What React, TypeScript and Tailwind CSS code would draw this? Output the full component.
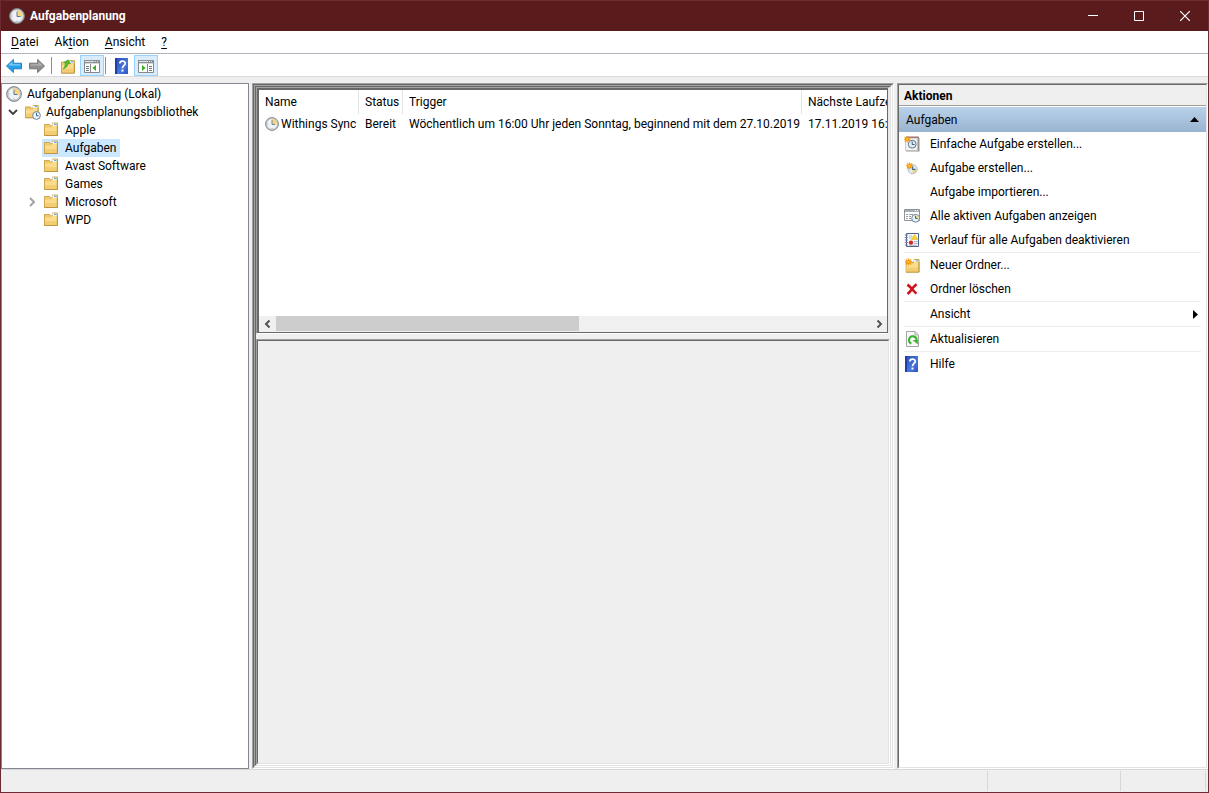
import React from 'react';

type IconProps = { className?: string };

function ClockFace({ className = 'size-4' }: IconProps) {
  return (
    <svg viewBox="0 0 16 16" className={`shrink-0 ${className}`} aria-hidden="true">
      <circle cx="8" cy="8" r="7.4" fill="#c3c6ca" stroke="#808388" strokeWidth="1" />
      <circle cx="8" cy="8" r="6" fill="#eff3f8" stroke="#b9bdc3" strokeWidth="0.6" />
      <path d="M8 8.4V2.2A5.8 5.8 0 0 1 13.8 8.4Z" fill="#f5d77e" />
      <path d="M8 3.6V8.5H11.6" fill="none" stroke="#5c7698" strokeWidth="1" />
      <path d="M8 12.6v1M2.6 8h1" stroke="#8b9097" strokeWidth="0.8" />
    </svg>
  );
}

function FolderShape() {
  return (
    <>
      <path d="M1.5 2.5h5l1 1.2h2V1h5V13.5H1.5Z" fill="#f0cb6c" stroke="#cb9f45" strokeWidth="0.9" />
      <path d="M9.4 1.5h4.4v2.2H9.4Z" fill="#fff" />
      <path d="M11 1.8h2.6v1h-2.6Z" fill="#3f97de" />
      <path d="M2 5.4h6l1.4-1.3H14v9H2Z" fill="#fadc8c" />
      <path d="M2 9.2h12v3.9H2Z" fill="#f2cd71" />
      <path d="M14.3 3.5v10H1.5" fill="none" stroke="#b98f3e" strokeWidth="0.8" />
    </>
  );
}

function FolderIcon({ className = 'size-4' }: IconProps) {
  return (
    <svg viewBox="0 0 16 16" className={className} aria-hidden="true">
      <FolderShape />
    </svg>
  );
}

function LibraryIcon() {
  return (
    <svg viewBox="0 0 16 16" className="size-4" aria-hidden="true">
      <g transform="translate(-1 0.5) scale(0.98)">
        <FolderShape />
      </g>
      <circle cx="11.5" cy="11.5" r="3.9" fill="#eef4f9" stroke="#6f8394" strokeWidth="1" />
      <path d="M11.5 8.8v3h2.2" fill="none" stroke="#35648f" strokeWidth="1" />
    </svg>
  );
}

function Spark() {
  return (
    <>
      <path d="M4.4 0l1 2.3L7.9 1.2 6.8 3.5l2.4.9-2.4 1 1.1 2.3-2.5-1-1 2.3-1-2.3-2.4 1 1-2.3L0 4.4l2-1L1 1.2l2.4 1.1Z" fill="#f79a10" stroke="#f79a10" strokeWidth="0.6" />
      <circle cx="4.4" cy="4.4" r="1.3" fill="#ffcf4a" />
    </>
  );
}

function WizardIcon() {
  return (
    <svg viewBox="0 0 16 16" className="size-4" aria-hidden="true">
      <path d="M3 1h11l1.5 1.5v13H2Z" fill="#9a9492" />
      <path d="M2 0.6h12.6v1.4H2Z" fill="#8a4f49" />
      <path d="M1.5 2h12v12.5h-12Z" fill="#f1f1f1" stroke="#c2bfbd" strokeWidth="0.8" />
      <circle cx="8.2" cy="8.2" r="3.9" fill="#e3edf3" stroke="#607a8c" strokeWidth="1" />
      <path d="M8.2 5.6v2.9h2.4" fill="none" stroke="#3a5d7e" strokeWidth="1" />
      <g transform="scale(0.72)">
        <Spark />
      </g>
    </svg>
  );
}

function NewTaskIcon() {
  return (
    <svg viewBox="0 0 16 16" className="size-4" aria-hidden="true">
      <circle cx="8.6" cy="9.2" r="4.6" fill="#e1eaf2" stroke="#b3bfc9" strokeWidth="1" />
      <path d="M8.6 9.2V13.3A4.2 4.2 0 0 0 12.8 9.2Z" fill="#f1cf83" />
      <path d="M8.6 6.2v3.2h2.8" fill="none" stroke="#3c6a96" strokeWidth="1.2" />
      <g transform="translate(2 2.4) scale(0.78)">
        <Spark />
      </g>
    </svg>
  );
}

function ActiveTasksIcon() {
  return (
    <svg viewBox="0 0 16 16" className="size-4" aria-hidden="true">
      <path d="M0.5 1.5h15v11H0.5Z" fill="#fff" stroke="#8e9398" />
      <path d="M1 2h14v2H1Z" fill="#a8adb3" />
      <path d="M11 2.5h1M13 2.5h1" stroke="#fff" />
      <path d="M2 6.5h2M5 6.5h4M2 8.5h2M5 8.5h2M2 10.5h2M5 10.5h2" stroke="#8b9198" strokeWidth="0.9" />
      <circle cx="11.6" cy="10.3" r="3.9" fill="#e6eff5" stroke="#6f8597" strokeWidth="1" />
      <path d="M11.6 10.3V6.9A3.4 3.4 0 0 1 15 10.3Z" fill="#f3d78c" />
      <path d="M11.6 7.8v2.7h2" fill="none" stroke="#35648f" strokeWidth="1" />
    </svg>
  );
}

function HistoryIcon() {
  return (
    <svg viewBox="0 0 16 16" className="size-4" aria-hidden="true">
      <path d="M2.5 1.5h12v13h-12Z" fill="#f7f9fc" stroke="#4f648c" />
      <path d="M0.8 3h3M0.8 5.5h3M0.8 8h3M0.8 10.5h3M0.8 13h3" stroke="#6d7990" strokeWidth="1" />
      <path d="M5 4h3M5 6h2.4M10 9.5h3.5M10 11.5h3.5M5 13.3h8" stroke="#9aa6b8" strokeWidth="0.8" />
      <path d="M10.5 2.4l3.4 5h-6.8Z" fill="#fbd32e" stroke="#e6b41a" strokeWidth="0.6" />
      <circle cx="7" cy="10.6" r="2.2" fill="#d62a26" />
    </svg>
  );
}

function NewFolderIcon() {
  return (
    <svg viewBox="0 0 16 16" className="size-4" aria-hidden="true">
      <g transform="translate(0.6 1.6)">
        <FolderShape />
      </g>
      <g transform="translate(1 1.4) scale(0.78)">
        <Spark />
      </g>
    </svg>
  );
}

function DeleteIcon() {
  return (
    <svg viewBox="0 0 16 16" className="size-4" aria-hidden="true">
      <path d="M3.4 3.6Q6 5.6 8 8t4.4 4.6M12.6 3.2Q9.6 5.6 7.8 8.2T3.6 13" fill="none" stroke="#d0151a" strokeWidth="2.6" />
    </svg>
  );
}

function RefreshIcon() {
  return (
    <svg viewBox="0 0 16 16" className="size-4" aria-hidden="true">
      <path d="M2.5 0.5h8.6l3.4 3.4v11.6h-12Z" fill="#f8f8f8" stroke="#a5a5a5" />
      <path d="M11 0.8v3.2h3.2" fill="#e2e2e2" stroke="#a5a5a5" strokeWidth="0.8" />
      <path d="M7.4 12.4A3.7 3.7 0 1 1 12.4 9.6" fill="none" stroke="#39b52c" strokeWidth="2.1" />
      <path d="M8.6 9h5.2v4.6Z" fill="#39b52c" />
    </svg>
  );
}

function HelpIcon() {
  return (
    <svg viewBox="0 0 16 16" className="size-4" aria-hidden="true">
      <defs>
        <linearGradient id="helpBlue" x1="0" x2="1" y1="0" y2="1">
          <stop offset="0" stopColor="#2747b4" />
          <stop offset="0.6" stopColor="#4a78dc" />
          <stop offset="1" stopColor="#2d52bf" />
        </linearGradient>
      </defs>
      <path d="M1 0h13v16H1Z" fill="url(#helpBlue)" />
      <path d="M1 0h2v16H1Z" fill="#1f3fa6" />
      <path d="M5.8 5.6C5.8 2.2 11.2 2.3 11.2 5.4C11.2 7.4 8.5 7.6 8.5 10.2" fill="none" stroke="#fff" strokeWidth="1.7" />
      <path d="M7.5 11.6h2v2h-2Z" fill="#fff" />
    </svg>
  );
}

function ArrowIcon({ forward = false }: { forward?: boolean }) {
  const d = forward
    ? 'M15.5 8L8.6 1.4v3.8H0.5v5.6h8.1v3.8Z'
    : 'M0.5 8l6.9-6.6v3.8h8.1v5.6H7.4v3.8Z';
  const shine = forward ? 'M13.6 7.6L9.6 3.8v2.4h-8v1.4Z' : 'M2.4 7.6L6.4 3.8v2.4h8v1.4Z';
  return (
    <svg viewBox="0 0 16 16" className="size-4" aria-hidden="true">
      <path d={d} fill={forward ? '#8f8f8f' : '#27a0e8'} stroke={forward ? '#6c6c6c' : '#2475b8'} strokeWidth="0.9" />
      <path d={shine} fill={forward ? '#b4b4b4' : '#7fd0fa'} />
    </svg>
  );
}

function UpFolderIcon() {
  return (
    <svg viewBox="0 0 16 16" className="size-4" aria-hidden="true">
      <g transform="translate(0 1.6)">
        <FolderShape />
      </g>
      <path d="M3.2 11C5.8 10 7.8 8.4 8 5.6H10.4L8.2 1.8 3.8 4.6h1.7C5.4 7 4.8 9.2 3.2 11Z" fill="#4fc02f" stroke="#3a9a26" strokeWidth="0.6" />
    </svg>
  );
}

function PaneIcon({ right = false }: { right?: boolean }) {
  return (
    <svg viewBox="0 0 16 16" className="size-4" aria-hidden="true">
      <path d="M0.5 2.5h15v12H0.5Z" fill="#fff" stroke="#85898e" />
      <path d="M0 2h16v3H0Z" fill="#8c9095" />
      <path d="M1 3.5h9M11 3.5h1M13 3.5h1" stroke="#e2e4e6" />
      <path d="M1 5.5h14" stroke="#d5d8da" />
      {right ? (
        <>
          <path d="M9.5 6v8" stroke="#85898e" />
          <path d="M11 8.5h3M11 10.5h3M11 12.5h3" stroke="#70757a" />
          <path d="M4 7v6l3.6-3Z" fill="#3cab27" />
        </>
      ) : (
        <>
          <path d="M6.5 6v8" stroke="#85898e" />
          <path d="M2 8.5h3M2 10.5h3M2 12.5h3" stroke="#70757a" />
          <path d="M12 7v6l-3.6-3Z" fill="#3cab27" />
        </>
      )}
    </svg>
  );
}

function Chevron({ d, className }: { d: string; className: string }) {
  return (
    <svg viewBox="0 0 10 10" className={className} aria-hidden="true">
      <path d={d} fill="none" stroke="currentColor" strokeWidth="1.9" />
    </svg>
  );
}

const menus = [
  { before: '', key: 'D', after: 'atei' },
  { before: 'Ak', key: 't', after: 'ion' },
  { before: '', key: 'A', after: 'nsicht' },
  { before: '', key: '?', after: '' },
];

const folders = ['Apple', 'Aufgaben', 'Avast Software', 'Games', 'Microsoft', 'WPD'];

type Action = { label: string; icon?: React.ReactNode; submenu?: boolean };

const actionGroups: Action[][] = [
  [
    { label: 'Einfache Aufgabe erstellen...', icon: <WizardIcon /> },
    { label: 'Aufgabe erstellen...', icon: <NewTaskIcon /> },
    { label: 'Aufgabe importieren...' },
    { label: 'Alle aktiven Aufgaben anzeigen', icon: <ActiveTasksIcon /> },
    { label: 'Verlauf für alle Aufgaben deaktivieren', icon: <HistoryIcon /> },
  ],
  [
    { label: 'Neuer Ordner...', icon: <NewFolderIcon /> },
    { label: 'Ordner löschen', icon: <DeleteIcon /> },
  ],
  [{ label: 'Ansicht', submenu: true }],
  [{ label: 'Aktualisieren', icon: <RefreshIcon /> }],
  [{ label: 'Hilfe', icon: <HelpIcon /> }],
];

function Sunken({ className = '', children }: { className?: string; children?: React.ReactNode }) {
  return (
    <div className={`flex min-h-0 min-w-0 flex-col border border-t-[#a0a0a0] border-r-white border-b-white border-l-[#a0a0a0] ${className}`}>
      <div className="flex min-h-0 min-w-0 flex-1 flex-col border border-t-[#696969] border-r-[#e3e3e3] border-b-[#e3e3e3] border-l-[#696969]">
        {children}
      </div>
    </div>
  );
}

function TitleBar() {
  return (
    <header className="flex h-[30px] shrink-0 items-center bg-[#5a1b1d] pl-2 text-white">
      <ClockFace />
      <h1 className="ml-[5px] flex-1 font-bold">Aufgabenplanung</h1>
      <button type="button" aria-label="Minimieren" className="flex h-full w-[46px] items-center justify-center">
        <svg viewBox="0 0 10 10" className="size-[10px]"><path d="M0 4.5h10" stroke="#fff" /></svg>
      </button>
      <button type="button" aria-label="Maximieren" className="flex h-full w-[46px] items-center justify-center">
        <svg viewBox="0 0 10 10" className="size-[10px]"><path d="M0.5 0.5h9v9h-9Z" fill="none" stroke="#fff" /></svg>
      </button>
      <button type="button" aria-label="Schließen" className="flex h-full w-[46px] items-center justify-center">
        <svg viewBox="0 0 10 10" className="size-[10px]"><path d="M0 0l10 10M10 0L0 10" stroke="#fff" strokeWidth="1.2" /></svg>
      </button>
    </header>
  );
}

function Toolbar() {
  const plain = 'flex items-end pb-[2px]';
  const toggle = 'ml-1 flex w-6 items-end justify-center border border-[#99d1ff] bg-[#d8ecfb] pb-px';
  const divider = 'my-[2px] w-px bg-[#8d8d8d]';
  return (
    <div className="flex h-[23px] shrink-0 border-b border-[#dadada] bg-white pt-px pl-[5px]">
      <button type="button" aria-label="Zurück" className={plain}><ArrowIcon /></button>
      <button type="button" aria-label="Vorwärts" className={`ml-[7px] ${plain}`}><ArrowIcon forward /></button>
      <span className={`ml-[6px] ${divider}`} />
      <button type="button" aria-label="Eine Ebene nach oben" className={`ml-2 ${plain}`}><UpFolderIcon /></button>
      <button type="button" aria-label="Konsolenstruktur ein- oder ausblenden" className={toggle}><PaneIcon /></button>
      <span className={`ml-px ${divider}`} />
      <button type="button" aria-label="Hilfe" className={`ml-2 ${plain}`}><HelpIcon /></button>
      <button type="button" aria-label="Aktionsbereich ein- oder ausblenden" className={toggle}><PaneIcon right /></button>
    </div>
  );
}

function Tree() {
  return (
    <nav aria-label="Konsolenstruktur" className="w-[248px] shrink-0 border border-[#828790] bg-white pt-px">
      <ul>
        <li>
          <div className="flex h-[18px] items-center gap-[5px] pl-1"><ClockFace />Aufgabenplanung (Lokal)</div>
          <ul>
            <li>
              <div className="flex h-[18px] items-center pl-[6px]">
                <Chevron d="M1 3l4 4 4-4" className="size-[10px] text-[#404040]" />
                <span className="ml-[7px] flex items-center gap-[5px]"><LibraryIcon />Aufgabenplanungsbibliothek</span>
              </div>
              <ul>
                {folders.map((name) => (
                  <li key={name} className="flex h-[18px] items-center pl-[25px]">
                    <span className="flex w-[15px] shrink-0">
                      {name === 'Microsoft' && <Chevron d="M3 1l4 4-4 4" className="size-[10px] text-[#a0a0a0]" />}
                    </span>
                    <a href="#" className={`flex h-full items-center gap-[6px] pr-1 pl-px ${name === 'Aufgaben' ? 'bg-[#cce8ff]' : ''}`}>
                      <FolderIcon />{name}
                    </a>
                  </li>
                ))}
              </ul>
            </li>
          </ul>
        </li>
      </ul>
    </nav>
  );
}

function TaskList() {
  const head = 'h-6 overflow-hidden border-r border-[#e2e2e2] pl-[6px] text-left font-normal whitespace-nowrap last:border-r-0';
  const cell = 'h-[19px] overflow-hidden pl-[6px] whitespace-nowrap';
  return (
    <div className="flex h-[247px] shrink-0 flex-col border border-r-2 border-t-[#a0a0a0] border-r-[#e9e9e9] border-b-white border-l-[#a0a0a0]">
      <div className="flex min-h-0 flex-1 flex-col border-t-2 border-r border-b border-l-2 border-[#696969] bg-white">
        <div className="min-h-0 flex-1 overflow-hidden">
          <table className="w-full table-fixed border-separate border-spacing-0">
            <colgroup>
              <col className="w-[100px]" />
              <col className="w-[44px]" />
              <col className="w-[399px]" />
              <col />
            </colgroup>
            <thead>
              <tr>
                <th className={head}>Name</th>
                <th className={head}>Status</th>
                <th className={head}>Trigger</th>
                <th className={head}>Nächste Laufzeit</th>
              </tr>
            </thead>
            <tbody>
              <tr>
                <td className={cell}>
                  <span className="flex items-center gap-[2px]"><ClockFace className="size-[14px]" />Withings Sync</span>
                </td>
                <td className={cell}>Bereit</td>
                <td className={cell}>Wöchentlich um 16:00 Uhr jeden Sonntag, beginnend mit dem 27.10.2019</td>
                <td className={cell}>17.11.2019 16:00</td>
              </tr>
            </tbody>
          </table>
        </div>
        <div className="flex h-4 shrink-0 bg-[#f0f0f0] text-[#505050]">
          <button type="button" aria-label="Nach links" className="flex w-[17px] items-center justify-center">
            <Chevron d="M6.5 1.5L3 5l3.5 3.5" className="size-[10px]" />
          </button>
          <div className="flex-1"><div className="h-[15px] w-[51%] bg-[#cdcdcd]" /></div>
          <button type="button" aria-label="Nach rechts" className="flex w-[17px] items-center justify-center">
            <Chevron d="M3.5 1.5L7 5 3.5 8.5" className="size-[10px]" />
          </button>
        </div>
      </div>
    </div>
  );
}

function Actions() {
  return (
    <Sunken className="w-[311px] shrink-0">
      <aside className="flex flex-1 flex-col bg-white">
        <h2 className="flex h-[21px] items-end border-b border-[#a0a0a0] bg-[#efefef] pb-px pl-[5px] font-bold">Aktionen</h2>
        <button type="button" className="mt-px flex h-[25px] items-center justify-between bg-linear-to-b from-[#b9d1ea] to-[#99b4d1] pr-[7px] pl-[7px]">
          Aufgaben
          <svg viewBox="0 0 9 5" className="h-[5px] w-[9px]"><path d="M4.5 0L9 5H0Z" fill="#000" /></svg>
        </button>
        {actionGroups.map((group, i) => (
          <ul key={group[0].label} className={`mr-[5px] ml-[5px] ${i > 0 ? 'border-t border-[#ededed]' : ''}`}>
            {group.map((action) => (
              <li key={action.label}>
                <button type="button" className="flex h-6 w-full items-center text-left">
                  <span className="mr-[10px] flex size-4 shrink-0">{action.icon}</span>
                  <span className="flex-1">{action.label}</span>
                  {action.submenu && (
                    <svg viewBox="0 0 5 9" className="mr-[3px] h-[9px] w-[5px]"><path d="M0 0l5 4.5L0 9Z" fill="#000" /></svg>
                  )}
                </button>
              </li>
            ))}
          </ul>
        ))}
      </aside>
    </Sunken>
  );
}

export default function App() {
  return (
    <div className="flex h-screen min-h-[420px] flex-col border border-[#6b2b30] bg-[#efefef] font-['Roboto',sans-serif] text-[12px] leading-4 text-black">
      <TitleBar />
      <nav aria-label="Menüleiste" className="flex h-[23px] shrink-0 items-center gap-4 border-b border-[#b1b5bd] bg-white pl-[10px]">
        {menus.map((m) => (
          <button key={m.key} type="button">
            {m.before}<span className="underline underline-offset-2">{m.key}</span>{m.after}
          </button>
        ))}
      </nav>
      <Toolbar />
      <main className="flex min-h-0 flex-1 pt-[6px]">
        <Tree />
        <Sunken className="ml-[3px] flex-1">
          <Sunken className="flex-1">
            <TaskList />
            <Sunken className="mt-[5px] flex-1" />
          </Sunken>
        </Sunken>
        <div className="ml-[3px] flex"><Actions /></div>
      </main>
      <footer className="flex h-[23px] shrink-0 justify-end border-t border-[#d7d7d7] py-px pr-[2px]">
        <span className="w-[133px] border-l border-[#d7d7d7]" />
        <span className="w-[86px] border-x border-[#d7d7d7]" />
      </footer>
    </div>
  );
}
